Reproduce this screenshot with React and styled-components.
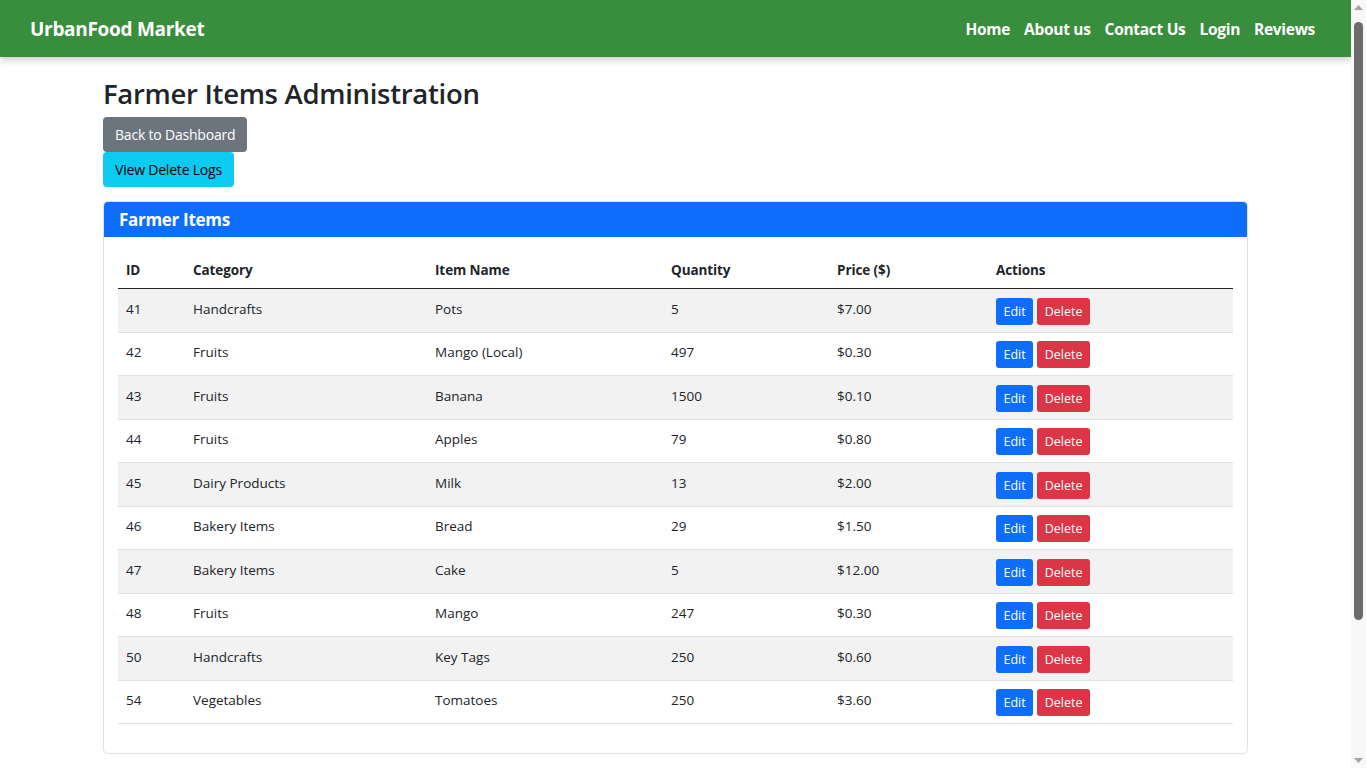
import styled, { createGlobalStyle } from "styled-components";

const GlobalStyle = createGlobalStyle`
  * {
    box-sizing: border-box;
  }
  body {
    margin: 0;
    font-family: "Open Sans", "Noto Sans", sans-serif;
    font-size: 15px;
    color: #212529;
    background: #fff;
  }
`;

const Page = styled.div`
  width: 1351px;
`;

const Nav = styled.nav`
  height: 57px;
  background: #388e3c;
  box-shadow: 0 2px 8px rgba(0, 0, 0, 0.25);
  display: flex;
  align-items: center;
  justify-content: space-between;
  padding: 0 36px 0 30px;
  color: #fff;
`;

const Brand = styled.a`
  font-size: 19px;
  font-weight: 700;
  letter-spacing: -0.3px;
`;

const Links = styled.div`
  display: flex;
  gap: 14px;
  a {
    font-size: 15.5px;
    font-weight: 700;
    letter-spacing: -0.3px;
  }
`;

const Container = styled.main`
  width: 1145px;
  margin: 0 auto;
  padding: 18px 0 190px;
`;

const Title = styled.h2`
  margin: 0 0 4px;
  font-size: 27.5px;
  font-weight: 600;
  line-height: 38px;
  letter-spacing: -0.3px;
`;

const Button = styled.button`
  display: block;
  border: 0;
  border-radius: 4px;
  padding: 7px 12px;
  font-family: inherit;
  font-size: 14px;
  line-height: 21px;
  letter-spacing: -0.2px;
  background: ${(p) => p.$bg};
  color: ${(p) => p.$color};
`;

const Card = styled.section`
  margin-top: 14px;
  border: 1px solid #dee2e6;
  border-radius: 5px;
  overflow: hidden;
`;

const CardHeader = styled.div`
  background: #0d6efd;
  color: #fff;
  height: 35px;
  display: flex;
  align-items: center;
  padding: 0 15px;
  font-size: 17px;
  font-weight: 700;
  letter-spacing: -0.3px;
`;

const CardBody = styled.div`
  padding: 16px 14px 15px;
`;

const Table = styled.table`
  width: 100%;
  border-collapse: collapse;
  table-layout: fixed;
  margin-bottom: 14px;
  font-size: 13.5px;

  th {
    text-align: left;
    font-weight: 700;
    padding: 8px 8px 9px;
    border-bottom: 1.5px solid #212529;
    height: 35px;
    letter-spacing: -0.1px;
  }
  td {
    padding: 0 8px 3px;
    height: 43.5px;
    border-bottom: 1px solid #dee2e6;
    vertical-align: middle;
  }
  tbody tr:nth-child(odd) td {
    background: #f2f2f2;
  }
`;

const SmallBtn = styled.button`
  border: 0;
  border-radius: 3px;
  height: 27px;
  padding: 0 7.5px;
  margin: 5px 4px 0 0;
  font-family: inherit;
  font-size: 12.5px;
  color: #fff;
  background: ${(p) => p.$bg};
`;

const Scrollbar = styled.div`
  position: fixed;
  top: 0;
  right: 0;
  width: 15px;
  height: 768px;
  background: #f8f8f8;
  display: flex;
  flex-direction: column;
  align-items: center;
  justify-content: space-between;
  padding: 5px 0;
`;

const Thumb = styled.div`
  position: absolute;
  top: 22px;
  left: 3px;
  width: 9px;
  height: 598px;
  border-radius: 5px;
  background: #6b6b6b;
`;

const rows = [
  [41, "Handcrafts", "Pots", 5, "$7.00"],
  [42, "Fruits", "Mango (Local)", 497, "$0.30"],
  [43, "Fruits", "Banana", 1500, "$0.10"],
  [44, "Fruits", "Apples", 79, "$0.80"],
  [45, "Dairy Products", "Milk", 13, "$2.00"],
  [46, "Bakery Items", "Bread", 29, "$1.50"],
  [47, "Bakery Items", "Cake", 5, "$12.00"],
  [48, "Fruits", "Mango", 247, "$0.30"],
  [50, "Handcrafts", "Key Tags", 250, "$0.60"],
  [54, "Vegetables", "Tomatoes", 250, "$3.60"],
];

export default function App() {
  return (
    <Page>
      <GlobalStyle />
      <Nav>
        <Brand>UrbanFood Market</Brand>
        <Links>
          <a>Home</a>
          <a>About us</a>
          <a>Contact Us</a>
          <a>Login</a>
          <a>Reviews</a>
        </Links>
      </Nav>
      <Container>
        <Title>Farmer Items Administration</Title>
        <Button $bg="#6c757d" $color="#fff">Back to Dashboard</Button>
        <Button $bg="#0dcaf0" $color="#000">View Delete Logs</Button>
        <Card>
          <CardHeader>Farmer Items</CardHeader>
          <CardBody>
            <Table>
              <colgroup>
                <col style={{ width: 67 }} />
                <col style={{ width: 242 }} />
                <col style={{ width: 236 }} />
                <col style={{ width: 166 }} />
                <col style={{ width: 159 }} />
                <col />
              </colgroup>
              <thead>
                <tr>
                  <th>ID</th>
                  <th>Category</th>
                  <th>Item Name</th>
                  <th>Quantity</th>
                  <th>Price ($)</th>
                  <th>Actions</th>
                </tr>
              </thead>
              <tbody>
                {rows.map((r) => (
                  <tr key={r[0]}>
                    <td>{r[0]}</td>
                    <td>{r[1]}</td>
                    <td>{r[2]}</td>
                    <td>{r[3]}</td>
                    <td>{r[4]}</td>
                    <td>
                      <SmallBtn $bg="#0d6efd">Edit</SmallBtn>
                      <SmallBtn $bg="#dc3545">Delete</SmallBtn>
                    </td>
                  </tr>
                ))}
              </tbody>
            </Table>
          </CardBody>
        </Card>
      </Container>
      <Scrollbar>
        <svg width="9" height="5" viewBox="0 0 9 5">
          <path d="M0 5 L4.5 0 L9 5 Z" fill="#a3a3a3" />
        </svg>
        <Thumb />
        <svg width="9" height="5" viewBox="0 0 9 5">
          <path d="M0 0 L4.5 5 L9 0 Z" fill="#a3a3a3" />
        </svg>
      </Scrollbar>
    </Page>
  );
}
